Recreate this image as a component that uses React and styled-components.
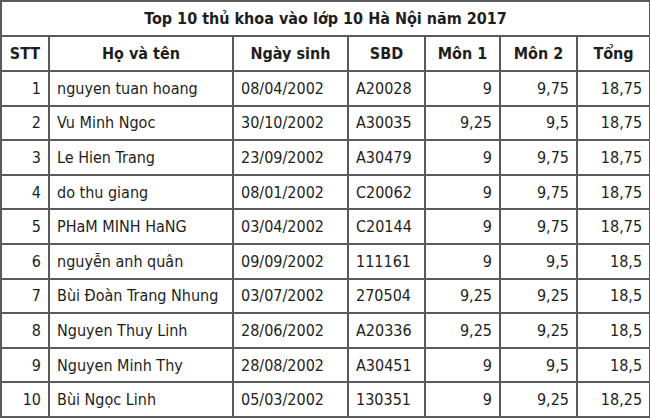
import styled, { createGlobalStyle } from 'styled-components';

const rows = [
  ['1', 'nguyen tuan hoang', '08/04/2002', 'A20028', '9', '9,75', '18,75'],
  ['2', 'Vu Minh Ngoc', '30/10/2002', 'A30035', '9,25', '9,5', '18,75'],
  ['3', 'Le Hien Trang', '23/09/2002', 'A30479', '9', '9,75', '18,75'],
  ['4', 'do thu giang', '08/01/2002', 'C20062', '9', '9,75', '18,75'],
  ['5', 'PHaM MINH HaNG', '03/04/2002', 'C20144', '9', '9,75', '18,75'],
  ['6', 'nguyễn anh quân', '09/09/2002', '111161', '9', '9,5', '18,5'],
  ['7', 'Bùi Đoàn Trang Nhung', '03/07/2002', '270504', '9,25', '9,25', '18,5'],
  ['8', 'Nguyen Thuy Linh', '28/06/2002', 'A20336', '9,25', '9,25', '18,5'],
  ['9', 'Nguyen Minh Thy', '28/08/2002', 'A30451', '9', '9,5', '18,5'],
  ['10', 'Bùi Ngọc Linh', '05/03/2002', '130351', '9', '9,25', '18,25'],
];

const align = ['right', 'left', 'left', 'left', 'right', 'right', 'right'];
const widths = [48, 184, 115, 77, 75, 77, 73];
const heads = ['STT', 'Họ và tên', 'Ngày sinh', 'SBD', 'Môn 1', 'Môn 2', 'Tổng'];

const Global = createGlobalStyle`
  body {
    margin: 0;
    background: #fff;
    font-family: "DejaVu Sans", Tahoma, sans-serif;
    font-stretch: condensed;
  }
`;

function App() {
  return (
    <>
      <Global />
      <S.Table>
        <colgroup>
          {widths.map((w, i) => (
            <col key={i} style={{ width: w }} />
          ))}
        </colgroup>
        <tbody>
          <tr>
            <S.Title colSpan={7}>Top 10 thủ khoa vào lớp 10 Hà Nội năm 2017</S.Title>
          </tr>
          <tr>
            {heads.map((h) => (
              <S.Head key={h}>{h}</S.Head>
            ))}
          </tr>
          {rows.map((r) => (
            <tr key={r[0]}>
              {r.map((c, i) => (
                <S.Cell key={i} $align={align[i]}>
                  {c}
                </S.Cell>
              ))}
            </tr>
          ))}
        </tbody>
      </S.Table>
    </>
  );
}

export default App;

const S = {
  Table: styled.table`
    width: 650px;
    border-collapse: collapse;
    table-layout: fixed;
    color: #1e1e1e;
    font-size: 16px;
  `,
  Title: styled.td`
    height: 33px;
    padding: 0;
    border: 2px solid #5a5a5a;
    text-align: center;
    font-weight: bold;
    font-size: 16px;
  `,
  Head: styled.td`
    height: 33px;
    padding: 0 6px;
    border: 2px solid #5a5a5a;
    text-align: center;
    font-weight: bold;
  `,
  Cell: styled.td`
    height: 32.6px;
    padding: 0 7px;
    border: 2px solid #5a5a5a;
    text-align: ${(p) => p.$align};
    white-space: nowrap;
  `,
};
